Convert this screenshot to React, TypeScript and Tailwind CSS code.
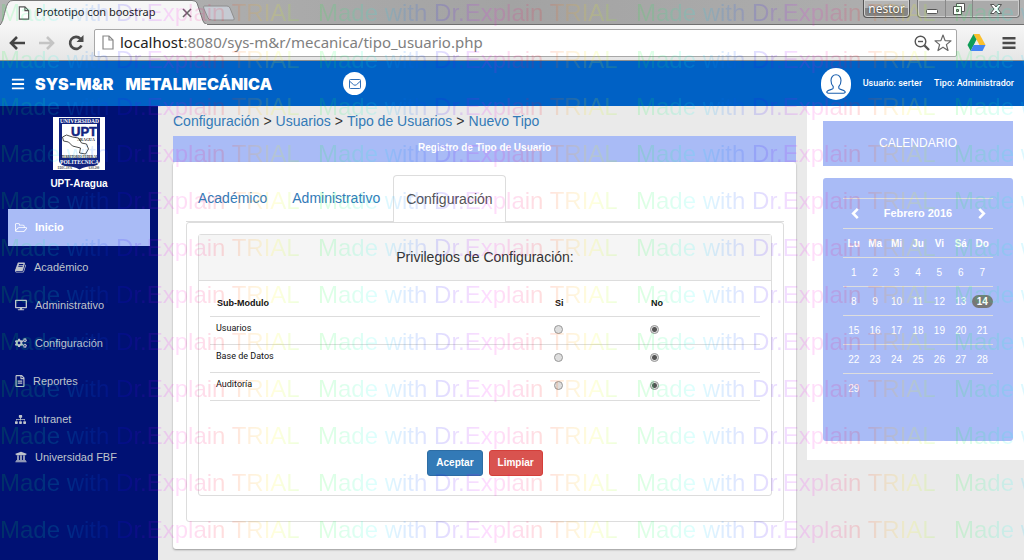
import { Fragment, type ReactNode } from "react";
import {
  FaBars,
  FaCogs,
  FaDesktop,
  FaRegFileAlt,
  FaSitemap,
  FaUniversity,
} from "react-icons/fa";

function BookIcon() {
  return (
    <svg viewBox="0 128 1664 1536" className="h-[11px] w-[11px]" fill="currentColor">
      <path d="M1639 478q40 57 18 129l-275 906q-19 64-76.5 107.5t-122.5 43.5h-923q-77 0-148.5-53.5t-99.5-131.5q-24-67-2-127 0-4 3-27t4-37q1-8-3-21.5t-3-19.5q2-11 8-21t16.5-23.5 16.5-23.5q23-38 45-91.5t30-91.5q3-10 .5-30t-.5-28q3-11 17-28t17-23q21-36 42-92t25-90q1-9-2.5-32t.5-28q4-13 22-30.5t22-22.5q19-26 42.5-84.5t27.5-96.5q1-8-3-25.5t-2-26.5q2-8 9-18t18-23 17-21q8-12 16.5-30.5t15-35 16-36 19.5-32 26.5-23.5 36-11.5 47.5 5.5l-1 3q38-9 51-9h761q74 0 114 56t18 130l-274 906q-36 119-71.5 153.5t-128.5 34.5h-869q-27 0-38 15-11 16-1 43 24 70 144 70h923q29 0 56-15.5t35-41.5l300-987q7-22 5-57 38 15 59 43zm-1064 2q-4 13 2 22.5t20 9.5h608q13 0 25.5-9.5t16.5-22.5l21-64q4-13-2-22.5t-20-9.5h-608q-13 0-25.5 9.5t-16.5 22.5zm-83 256q-4 13 2 22.5t20 9.5h608q13 0 25.5-9.5t16.5-22.5l21-64q4-13-2-22.5t-20-9.5h-608q-13 0-25.5 9.5t-16.5 22.5z" />
    </svg>
  );
}

function FolderIcon() {
  return (
    <svg viewBox="64 128 1920 1536" className="h-[10px] w-[12px]" fill="currentColor">
      <path d="M1845 931q0-35-53-35h-1088q-40 0-85.5 21.5t-71.5 52.5l-294 363q-18 24-18 40 0 35 53 35h1088q40 0 86-22t71-53l294-363q18-22 18-39zm-1141-163h768v-160q0-40-28-68t-68-28h-576q-40 0-68-28t-28-68v-64q0-40-28-68t-68-28h-320q-40 0-68 28t-28 68v853l256-315q44-53 116-87.5t140-34.5zm1269 163q0 62-46 120l-295 363q-43 53-116 87.5t-140 34.5h-1088q-92 0-158-66t-66-158v-960q0-92 66-158t158-66h320q92 0 158 66t66 158v32h544q92 0 158 66t66 158v160h192q54 0 99 24.5t67 70.5q15 32 15 68z" />
    </svg>
  );
}

const menu: { label: string; icon: ReactNode }[] = [
  { label: "Académico", icon: <BookIcon /> },
  { label: "Administrativo", icon: <FaDesktop className="size-[12px]" /> },
  { label: "Configuración", icon: <FaCogs className="size-[12px]" /> },
  { label: "Reportes", icon: <FaRegFileAlt className="h-[12px] w-[10px]" /> },
  { label: "Intranet", icon: <FaSitemap className="size-[11px]" /> },
  { label: "Universidad FBF", icon: <FaUniversity className="size-[12px]" /> },
];

const crumbs = ["Configuración", "Usuarios", "Tipo de Usuarios", "Nuevo Tipo"];
const modules = ["Usuarios", "Base de Datos", "Auditoría"];
const weekdays = ["Lu", "Ma", "Mi", "Ju", "Vi", "Sá", "Do"];
const weeks = [0, 1, 2, 3, 4].map((w) =>
  [1, 2, 3, 4, 5, 6, 7].map((d) => (w * 7 + d <= 29 ? w * 7 + d : null)),
);

function PageIcon({ className }: { className: string }) {
  return (
    <svg viewBox="0 0 12 15" className={className} fill="#fff" stroke="currentColor" strokeWidth="1.2">
      <path d="M1 1h6l4 4v9H1z" />
      <path d="M7 1v4h4" fill="none" />
    </svg>
  );
}

function BrowserChrome() {
  return (
    <div className="font-['Noto_Sans','Open_Sans',sans-serif]">
      <div className="relative flex h-[25px] items-start justify-between border-b border-[#707070] bg-linear-to-r from-[#b4b4b4] via-[#a3a3a3] to-[#b2b2b2]">
        <svg className="absolute left-0 top-0 h-[25px] w-[240px]" viewBox="0 0 240 25">
          <path d="M204 6h23q2 0 3 2l4 10q1 2-1 2h-21q-3 0-4-2l-4-9q-1-3 0-3z" fill="#c6cbd3" stroke="#8e8e8e" />
          <path d="M0 25C4 22 5 5 9 2q1-1.5 4-1.5h179q4 0 5 2.5l6 18q1 3 5 4z" fill="#f6f6f6" stroke="#777" />
          <path d="M1 25h206" stroke="#f6f6f6" strokeWidth="2" />
        </svg>
        <div className="relative flex h-[25px] w-[192px] items-center pl-[18px]">
          <PageIcon className="h-[14px] w-[12px] text-[#555]" />
          <span className="ml-[6px] flex-1 whitespace-nowrap text-[11px] text-[#222]">Prototipo con boostrap</span>
          <button aria-label="Cerrar pestaña">
            <svg viewBox="0 0 10 10" className="size-[10px]" stroke="#666" strokeWidth="1.6">
              <path d="M1 1l8 8M9 1L1 9" />
            </svg>
          </button>
        </div>
        <div className="flex gap-[7px] pr-[4px]">
          <button className="h-[18px] w-[47px] rounded-b-[4px] border border-t-0 border-[#555] bg-linear-to-b from-[#b5b5b5] from-50% to-[#858585] to-50% text-[12px] leading-[16px] text-white shadow-[inset_0_0_0_1px_#d0d0d0] text-shadow-[0_0_2px_#222]">
            nestor
          </button>
          <div className="flex h-[18px] rounded-b-[4px] border border-t-0 border-[#777] bg-[#aaa] shadow-[inset_0_0_0_1px_#ccc]">
            <button aria-label="Minimizar" className="flex w-[28px] items-center justify-center border-r border-[#888]">
              <svg viewBox="0 0 12 14" className="h-[14px] w-[12px]" fill="#fff" stroke="#555">
                <rect x=".5" y="7.5" width="11" height="4" rx="1" />
              </svg>
            </button>
            <button aria-label="Restaurar" className="flex w-[27px] items-center justify-center border-r border-[#888]">
              <svg viewBox="0 0 12 12" className="size-[12px]" fill="#fff" stroke="#555">
                <path d="M3.5.5h8v8h-8z" />
                <path d="M.5 3.5h8v8h-8z" />
                <path d="M3.5 6.5h2v2h-2z" fill="#aaa" />
              </svg>
            </button>
            <button aria-label="Cerrar" className="flex w-[46px] items-center justify-center">
              <svg viewBox="0 0 12 10" className="h-[10px] w-[12px]" fill="#fff" stroke="#555">
                <path d="M.5.5H4L6 3 8 .5h3.500L8 5l3.500 4.500H8L6 7 4 9.500H.5L4 5z" />
              </svg>
            </button>
          </div>
        </div>
      </div>
      <div className="flex h-[36px] items-center border-b border-[#8f8f8f] bg-linear-to-b from-[#f6f6f6] to-[#e6e6e6] pl-[9px] pr-[8px]">
        <button aria-label="Atrás">
          <svg viewBox="0 0 16 14" className="h-[14px] w-[16px]" fill="none" stroke="#444" strokeWidth="2.6">
            <path d="M8 1L2 7l6 6M2 7h14" />
          </svg>
        </button>
        <button aria-label="Adelante" className="ml-[14px]">
          <svg viewBox="0 0 16 14" className="h-[14px] w-[16px]" fill="none" stroke="#c4c4c4" strokeWidth="2.6">
            <path d="M8 1l6 6-6 6M14 7H0" />
          </svg>
        </button>
        <button aria-label="Recargar" className="ml-[13px]">
          <svg viewBox="0 0 16 16" className="size-[16px]" fill="none" stroke="#4a4a4a" strokeWidth="2.6">
            <path d="M12.5 3.8A6 6 0 1 0 13.500 10.500" />
            <path d="M15.5 0v7h-7z" fill="#4a4a4a" stroke="none" />
          </svg>
        </button>
        <div className="ml-[10px] flex h-[28px] flex-1 items-center rounded-[2px] border border-[#a8a8a8] bg-white pl-[7px] pr-[4px]">
          <PageIcon className="h-[15px] w-[12px] text-[#888]" />
          <span className="ml-[6px] flex-1 whitespace-nowrap text-[15px] text-[#808080]">
            <span className="text-[#222]">localhost</span>:8080/sys-m&amp;r/mecanica/tipo_usuario.php
          </span>
          <button aria-label="Zoom">
            <svg viewBox="0 0 16 16" className="size-[16px]" fill="none" stroke="#555" strokeWidth="1.4">
              <circle cx="6.5" cy="6.5" r="5.3" />
              <path d="M4 6.5h5" />
              <path d="M10.5 10.5l4.500 4.500" strokeWidth="2.4" />
            </svg>
          </button>
          <button aria-label="Favorito" className="ml-[4px]">
            <svg viewBox="0 0 18 18" className="size-[18px]" fill="#fff" stroke="#666" strokeWidth="1.2" strokeLinejoin="round">
              <path d="M9 1l2.100 5.600 5.900.3-4.600 3.700 1.600 5.900L9 13.200 4 16.500l1.600-5.900L1 6.900l5.900-.3z" />
            </svg>
          </button>
        </div>
        <svg viewBox="0 0 18 17" className="ml-[10px] h-[17px] w-[19px]">
          <path d="M6 0h6l6 11h-6z" fill="#fbc02d" />
          <path d="M6 0l3 5.500L3.200 17 0 11z" fill="#0f9d58" />
          <path d="M6 11h12l-3 6H3.200z" fill="#4285f4" />
        </svg>
        <button aria-label="Menú del navegador" className="ml-[16px]">
          <svg viewBox="0 0 13 12" className="h-[12px] w-[14px]" fill="#4a4a4a">
            <path d="M0 0h13v2.600H0zM0 4.700h13v2.600H0zM0 9.400h13V12H0z" />
          </svg>
        </button>
      </div>
    </div>
  );
}

function Crest() {
  return (
    <svg viewBox="0 0 52 53" className="h-[53px] w-[52px] bg-white" role="img" aria-label="Universidad Politécnica Territorial UPT Aragua">
      <path d="M6 1h41v43q-1 4-6 5-9 0-14.500 3.500Q21 49 12 49q-5-1-6-5z" fill="#12237f" />
      <path d="M9 7h35v34H9z" fill="#fff" />
      <path d="M9.500 20l4-2 6 2 6 1 3 5 5 1 2 5-3 5-6-1 1-5-8-2-4-4-5-1z" fill="#fff" stroke="#222" strokeWidth=".8" />
      <g fontFamily="Liberation Serif, serif" fontWeight="700" textAnchor="middle">
        <text x="26.500" y="6" fontSize="5.500" fill="#fff">UNIVERSIDAD</text>
        <text x="26.500" y="47" fontSize="5.500" fill="#fff">POLITECNICA</text>
        <text x="26.500" y="41" fontSize="3.200" fill="#222">TERRITORIO FEDERAL</text>
        <text x="33" y="24" fontSize="4" fill="#222">ARAGUA</text>
        <text x="12" y="52" fontSize="3" fill="#444">EDIC.1976</text>
        <text x="41" y="52" fontSize="3" fill="#444">6.03.200</text>
      </g>
      <text x="31" y="19" fontSize="13" fontWeight="700" textAnchor="middle" fill="#12237f" stroke="#12237f" strokeWidth=".5" fontFamily="Liberation Sans, sans-serif">
        UPT
      </text>
    </svg>
  );
}

function AppHeader() {
  return (
    <header className="flex h-[45px] items-center bg-[#0061c5] pl-[11px] pr-[10px] text-white">
      <button aria-label="Mostrar menú">
        <FaBars className="size-[14px]" />
      </button>
      <h1 className="ml-[10px] flex w-[308px] gap-[12px] whitespace-nowrap font-[Inter,sans-serif] text-[16px] font-black">
        <span>SYS-M&amp;R</span>
        <span>METALMECÁNICA</span>
      </h1>
      <button aria-label="Mensajes" className="flex size-[23px] items-center justify-center rounded-full bg-white">
        <svg viewBox="0 0 12 10" className="h-[10px] w-[12px]" fill="none" stroke="#2f6fb8">
          <rect x=".5" y=".5" width="11" height="9" rx=".8" />
          <path d="M1 2.500l3.500 3.200q1.500 1.200 3 0L11 2.500" />
        </svg>
      </button>
      <div className="ml-auto flex items-center whitespace-nowrap font-[Roboto,sans-serif] text-[9px] font-medium">
        <span className="mr-[12px] flex h-[32px] w-[30px] items-center justify-center rounded-full bg-white">
          <svg viewBox="0 0 20 20" className="size-[20px]" fill="none" stroke="#1b5fae" strokeWidth="1.1">
            <path d="M10 .8c3 0 5 2.400 5 5.800 0 2.500-.8 4.600-2.200 5.900v1.800c0 1.200 5 1.400 6.200 3.200.5 1-.2 1.700-1.500 1.700h-15C1.200 19.200.5 18.500 1 17.500c1.200-1.800 6.200-2 6.200-3.200v-1.800C5.800 11.200 5 9.100 5 6.600 5 3.200 7 .8 10 .8z" />
          </svg>
        </span>
        <span>Usuario: serter</span>
        <span className="ml-[12px]">Tipo: Administrador</span>
      </div>
    </header>
  );
}

function Sidebar() {
  return (
    <aside className="w-[158px] shrink-0 bg-[#001174] px-[8px] pt-[11px] font-['Liberation_Sans',sans-serif] text-[11px]">
      <div className="flex flex-col items-center">
        <Crest />
        <p className="mt-[6px] text-[10px] font-bold leading-[16px] text-white">UPT-Aragua</p>
      </div>
      <nav className="mt-[17px]">
        <a href="#inicio" className="flex h-[37px] items-center gap-[8px] bg-[#a9bbf6] pl-[7px] font-bold text-white">
          <FolderIcon />
          Inicio
        </a>
        <ul className="pt-[2px]">
          {menu.map(({ label, icon }) => (
            <li key={label}>
              <a href="#menu" className="flex h-[38px] items-center gap-[8px] pl-[7px] text-[#bfc4cc]">
                {icon}
                {label}
              </a>
            </li>
          ))}
        </ul>
      </nav>
    </aside>
  );
}

const radioStyle =
  "block size-[9px] appearance-none rounded-full border border-[#999] bg-[#dedede] checked:bg-[radial-gradient(circle,#555_0_2px,#dedede_3px)]";

function Privileges() {
  return (
    <form className="rounded-[3px] border border-[#ddd] bg-white">
      <h2 className="flex h-[46px] items-center justify-center border-b border-[#ddd] bg-[#f5f5f5] text-[14px] text-[#333]">
        Privilegios de Configuración:
      </h2>
      <div className="px-[11px] pb-[19px] pt-[11px]">
        <table className="w-full table-fixed border-collapse text-left font-[Roboto,sans-serif] text-[9px] text-[#111]">
          <colgroup>
            <col />
            <col className="w-[96px]" />
            <col className="w-[115px]" />
          </colgroup>
          <thead className="font-['Liberation_Sans',sans-serif]">
            <tr className="h-[24px] border-b border-[#ddd]">
              <th className="pl-[7px]">Sub-Modulo</th>
              <th className="pl-[6px]">Si</th>
              <th className="pl-[6px]">No</th>
            </tr>
          </thead>
          <tbody>
            {modules.map((m) => (
              <tr key={m} className="h-[28px] border-b border-[#ddd]">
                <td className="pb-[2px] pl-[6px]">{m}</td>
                <td className="pb-px pl-[5px]">
                  <input type="radio" name={m} aria-label={`${m}: Si`} className={radioStyle} />
                </td>
                <td className="pb-px pl-[5px]">
                  <input type="radio" name={m} aria-label={`${m}: No`} defaultChecked className={radioStyle} />
                </td>
              </tr>
            ))}
          </tbody>
        </table>
        <div className="mt-[49px] flex justify-center gap-[6px] text-[10px] font-bold text-white">
          <button type="button" className="h-[26px] rounded-[3px] border border-[#2e6da4] bg-[#337ab7] px-[8px]">
            Aceptar
          </button>
          <button type="reset" className="h-[26px] rounded-[3px] border border-[#d43f3a] bg-[#d9534f] px-[8px]">
            Limpiar
          </button>
        </div>
      </div>
    </form>
  );
}

function Content() {
  return (
    <main className="min-w-0 flex-1 pb-[10px] pl-[15px] pr-[11px] font-['Liberation_Sans',sans-serif]">
      <nav className="flex h-[30px] items-center gap-[4px] whitespace-nowrap text-[14px] text-[#333]">
        {crumbs.map((c, i) => (
          <Fragment key={c}>
            {i > 0 && <span>&gt;</span>}
            <a href="#ruta" className="text-[#337ab7]">{c}</a>
          </Fragment>
        ))}
      </nav>
      <h2 className="flex h-[26px] items-center justify-center bg-[#a9bbf6] pb-[3px] text-[10px] font-bold text-white">
        Registro de Tipo de Usuario
      </h2>
      <section className="rounded-[3px] bg-white pb-[27px] pl-[13px] pr-[12px] pt-[13px] shadow-[0_1px_2px_#999]">
        <div role="tablist" className="flex h-[47px] border-b border-[#ddd] text-[14px]">
          <button role="tab" aria-selected="false" className="px-[12px] text-[#337ab7]">
            Académico
          </button>
          <button role="tab" aria-selected="false" className="ml-px px-[12px] text-[#337ab7]">
            Administrativo
          </button>
          <button role="tab" aria-selected="true" className="-mb-px ml-px rounded-t-[4px] border border-b-0 border-[#ddd] bg-white px-[12px] text-[#555]">
            Configuración
          </button>
        </div>
        <div className="rounded-[3px] border border-[#ddd] px-[11px] pb-[25px] pt-[11px]">
          <Privileges />
        </div>
      </section>
    </main>
  );
}

function Chevron({ d }: { d: string }) {
  return (
    <svg viewBox="0 0 8 12" className="h-[11px] w-[8px]" fill="none" stroke="#fff" strokeWidth="2.8">
      <path d={d} />
    </svg>
  );
}

function Calendar() {
  return (
    <aside className="w-[217px] shrink-0 self-start bg-white pb-[19px] pl-[16px] pr-[11px] pt-[15px] font-['Liberation_Sans',sans-serif] text-white">
      <h3 className="flex h-[45px] items-center justify-center bg-[#a9bbf6] pb-[2px] text-[12px]">CALENDARIO</h3>
      <div className="mt-[12px] rounded-[3px] bg-[#a9bbf6] px-[20px] pb-[38px] pt-[20px]">
        <table className="w-full table-fixed border-collapse text-center text-[10px]">
          <thead className="font-bold">
            <tr className="h-[30px] border-t border-[#ddd]">
              <th>
                <button aria-label="Mes anterior" className="mx-auto block pl-[3px]">
                  <Chevron d="M7 1L2 6l5 5" />
                </button>
              </th>
              <th colSpan={5} className="text-[11px]">Febrero 2016</th>
              <th>
                <button aria-label="Mes siguiente" className="mx-auto block">
                  <Chevron d="M1 1l5 5-5 5" />
                </button>
              </th>
            </tr>
            <tr className="h-[29px] border-t border-[#ddd]">
              {weekdays.map((d) => (
                <th key={d}>{d}</th>
              ))}
            </tr>
          </thead>
          <tbody>
            {weeks.map((week, i) => (
              <tr key={i} className="h-[29px] border-t border-[#ddd]">
                {week.map((d, j) => (
                  <td key={j}>
                    {d === 14 ? (
                      <span className="block rounded-full bg-[#777] font-bold leading-[13px]">{d}</span>
                    ) : (
                      d
                    )}
                  </td>
                ))}
              </tr>
            ))}
          </tbody>
        </table>
      </div>
    </aside>
  );
}

function Watermark() {
  return (
    <div aria-hidden="true" className="pointer-events-none absolute inset-0 select-none overflow-hidden font-['Liberation_Sans',sans-serif] text-[24px] leading-[47px] opacity-[0.13]">
      <div className="-mt-[11px]">
        {Array.from({ length: 12 }, (_, row) => (
          <div key={row} className="flex">
            {Array.from({ length: 4 }, (_, col) => (
              <span
                key={col}
                className="w-[318px] shrink-0 whitespace-nowrap bg-[linear-gradient(90deg,#00ff20_0,#00ff80_30px,#00ffff_60px,#0080ff_85px,#2000ff_125px,#a000ff_150px,#ff00ff_170px,#ff0080_200px,#ff0000_225px,#ff8000_245px,#ffff00_275px,#80ff00_300px)] bg-clip-text text-transparent"
              >
                Made with Dr.Explain TRIAL
              </span>
            ))}
          </div>
        ))}
      </div>
    </div>
  );
}

export default function App() {
  return (
    <div className="relative flex min-h-screen flex-col overflow-hidden bg-[#eaeaea]">
      <BrowserChrome />
      <AppHeader />
      <div className="flex flex-1">
        <Sidebar />
        <Content />
        <Calendar />
      </div>
      <Watermark />
    </div>
  );
}
